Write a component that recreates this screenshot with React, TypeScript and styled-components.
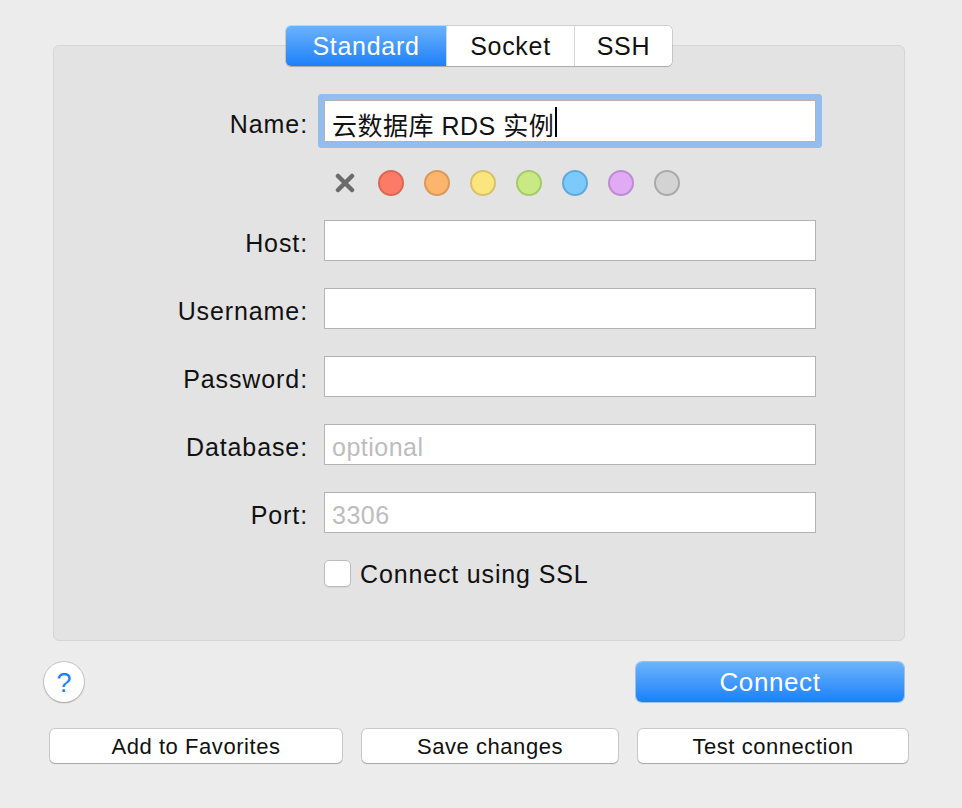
import React from "react";
import styled, { createGlobalStyle } from "styled-components";

const Global = createGlobalStyle`
  html, body { margin: 0; padding: 0; background: #ececec; }
  body {
    font-family: "Liberation Sans", Arial, "Noto Sans CJK SC", sans-serif;
    color: #1a1a1a;
    -webkit-font-smoothing: antialiased;
  }
`;

const Page = styled.div`
  width: 962px;
  height: 808px;
  padding-top: 26px;
  box-sizing: border-box;
  background: #ececec;
`;

const Top = styled.div`
  width: 852px;
  margin-left: 53px;
  display: flex;
  flex-direction: column;
  align-items: center;
`;

const Tabs = styled.div`
  position: relative;
  z-index: 1;
  display: flex;
  height: 40px;
  margin-bottom: -21px;
  border-radius: 5px;
  background: #fff;
  box-shadow: 0 0 0 1px rgba(0,0,0,0.12), 0 1px 1px rgba(0,0,0,0.15);
  overflow: hidden;
`;

const Tab = styled.div<{ $active?: boolean; $w: number }>`
  width: ${(p) => p.$w}px;
  display: flex;
  align-items: center;
  justify-content: center;
  font-size: 25px;
  letter-spacing: 0.7px;
  color: ${(p) => (p.$active ? "#fff" : "#111")};
  background: ${(p) => (p.$active ? "linear-gradient(#6cb2fa, #1d80fb)" : "#fff")};
  & + & { border-left: 1px solid #d6d6d6; }
`;

const Panel = styled.div`
  width: 852px;
  box-sizing: border-box;
  background: #e3e3e3;
  border: 1px solid #d6d6d6;
  border-radius: 6px;
  padding: 54px 0 53px;
  display: flex;
  flex-direction: column;
`;

const Row = styled.div<{ $mt?: number }>`
  display: grid;
  grid-template-columns: 254px 492px;
  column-gap: 16px;
  align-items: center;
  margin-top: ${(p) => p.$mt ?? 0}px;
`;

const Label = styled.div`
  text-align: right;
  font-size: 25px;
  letter-spacing: 0.9px;
  padding-top: 6px;
  color: #111;
`;

const Field = styled.div<{ $focus?: boolean }>`
  height: ${(p) => (p.$focus ? 42 : 41)}px;
  box-sizing: border-box;
  background: #fff;
  border: 1px solid #b3b3b3;
  display: flex;
  align-items: center;
  padding: 5px 0 0 7px;
  font-size: 25px;
  letter-spacing: 0.5px;
  color: #111;
  box-shadow: ${(p) => (p.$focus ? "0 0 0 6px #93bdec" : "none")};
  border-radius: ${(p) => (p.$focus ? "1px" : "0")};
`;

const Placeholder = styled.span`
  color: #bdbdbd;
`;

const Caret = styled.span`
  display: inline-block;
  width: 2px;
  height: 30px;
  background: #000;
  margin: -4px 0 0 1px;
`;

const Swatches = styled.div`
  display: flex;
  align-items: center;
  gap: 20px;
  margin-left: 8px;
  height: 26px;
`;

const Swatch = styled.div<{ $bg: string; $bd: string }>`
  width: 26px;
  height: 26px;
  box-sizing: border-box;
  border-radius: 50%;
  background: ${(p) => p.$bg};
  border: 2px solid ${(p) => p.$bd};
`;

const ClearMark = styled.div`
  width: 26px;
  height: 26px;
  display: flex;
  align-items: center;
  justify-content: center;
`;

const Check = styled.div`
  display: flex;
  align-items: center;
  gap: 9px;
  height: 27px;
  font-size: 25px;
  letter-spacing: 0.85px;
  color: #111;
`;

const CheckText = styled.span`
  line-height: 27px;
  padding-top: 2px;
`;

const Box = styled.div`
  width: 27px;
  height: 27px;
  box-sizing: border-box;
  background: #fff;
  border: 1px solid #bcbcbc;
  border-radius: 5px;
  box-shadow: 0 1px 0 rgba(0,0,0,0.05);
`;

const ActionRow = styled.div`
  display: flex;
  justify-content: space-between;
  align-items: center;
  margin: 21px 58px 0 44px;
`;

const Help = styled.div`
  width: 40px;
  height: 40px;
  border-radius: 50%;
  background: #fff;
  box-shadow: 0 0 0 1px rgba(0,0,0,0.14), 0 1px 2px rgba(0,0,0,0.2);
  display: flex;
  align-items: center;
  justify-content: center;
  color: #1a7ffb;
  font-size: 27px;
  font-weight: 500;
  padding-top: 2px;
  box-sizing: border-box;
`;

const Primary = styled.div`
  width: 268px;
  height: 40px;
  border-radius: 6px;
  background: linear-gradient(#6cb4fb, #1b80fb);
  box-shadow: 0 0 0 1px rgba(20,110,230,0.35);
  color: #fff;
  font-size: 26px;
  letter-spacing: 0.6px;
  display: flex;
  align-items: center;
  justify-content: center;
`;

const ButtonRow = styled.div`
  display: flex;
  gap: 20px;
  margin: 27px 0 0 50px;
`;

const Btn = styled.div<{ $w: number }>`
  width: ${(p) => p.$w}px;
  height: 34px;
  box-sizing: border-box;
  background: #fff;
  border-radius: 5px;
  box-shadow: 0 0 0 1px rgba(0,0,0,0.14), 0 1px 1px rgba(0,0,0,0.18);
  display: flex;
  align-items: center;
  justify-content: center;
  padding-top: 1px;
  font-size: 22px;
  letter-spacing: 0.55px;
  color: #111;
`;

const colors: [string, string][] = [
  ["#fc7b67", "#dd6553"],
  ["#fdb46c", "#dc9858"],
  ["#fbe57f", "#d9c16a"],
  ["#c8e983", "#a5ca68"],
  ["#7ccafc", "#5ea9dc"],
  ["#e0aaf4", "#bd8ad3"],
  ["#d3d3d3", "#a9a9a9"],
];

const fields: { label: string; placeholder?: string }[] = [
  { label: "Host:" },
  { label: "Username:" },
  { label: "Password:" },
  { label: "Database:", placeholder: "optional" },
  { label: "Port:", placeholder: "3306" },
];

export default function App() {
  return (
    <Page>
      <Global />
      <Top>
        <Tabs>
          <Tab $active $w={160}>Standard</Tab>
          <Tab $w={127}>Socket</Tab>
          <Tab $w={97}>SSH</Tab>
        </Tabs>
        <Panel>
          <Row>
            <Label>Name:</Label>
            <Field $focus>
              云数据库 RDS 实例<Caret />
            </Field>
          </Row>
          <Row $mt={28}>
            <span />
            <Swatches>
              <ClearMark>
                <svg width="20" height="20" viewBox="0 0 20 20">
                  <path d="M3 3 L17 17 M17 3 L3 17" stroke="#6b6b6b" strokeWidth="4.5" strokeLinecap="round" />
                </svg>
              </ClearMark>
              {colors.map(([bg, bd]) => (
                <Swatch key={bg} $bg={bg} $bd={bd} />
              ))}
            </Swatches>
          </Row>
          {fields.map((f, i) => (
            <Row key={f.label} $mt={i === 0 ? 24 : 27}>
              <Label>{f.label}</Label>
              <Field>{f.placeholder && <Placeholder>{f.placeholder}</Placeholder>}</Field>
            </Row>
          ))}
          <Row $mt={27}>
            <span />
            <Check>
              <Box />
              <CheckText>Connect using SSL</CheckText>
            </Check>
          </Row>
        </Panel>
      </Top>
      <ActionRow>
        <Help>?</Help>
        <Primary>Connect</Primary>
      </ActionRow>
      <ButtonRow>
        <Btn $w={292}>Add to Favorites</Btn>
        <Btn $w={256}>Save changes</Btn>
        <Btn $w={270}>Test connection</Btn>
      </ButtonRow>
    </Page>
  );
}
